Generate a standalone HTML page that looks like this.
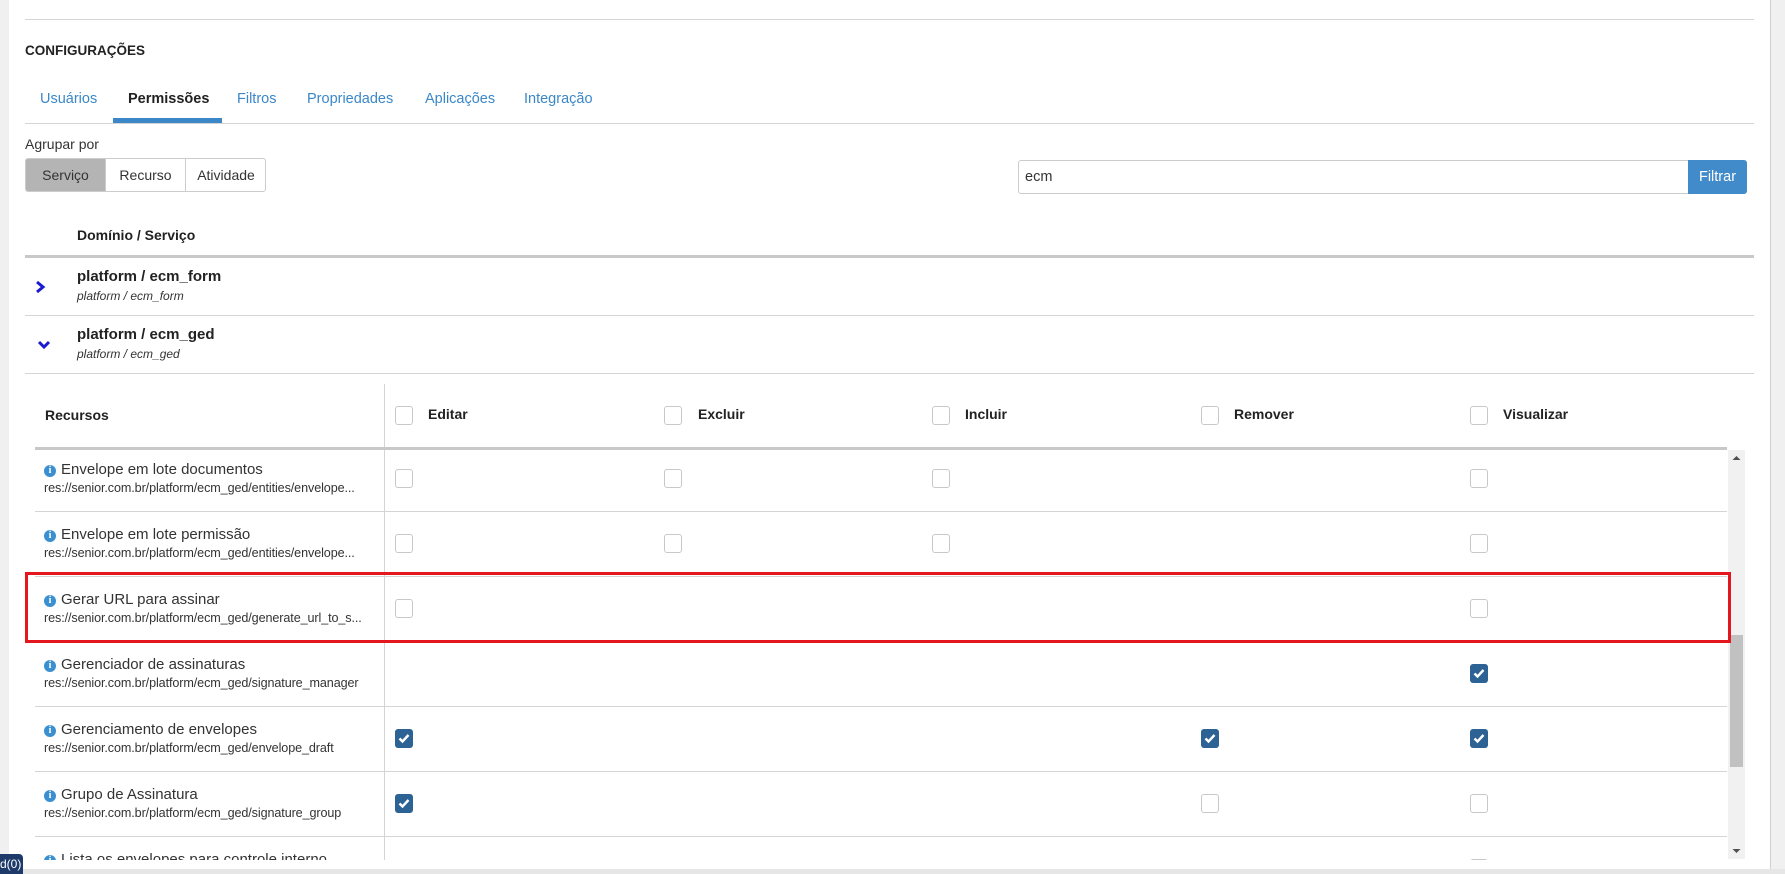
<!DOCTYPE html>
<html><head><meta charset="utf-8"><style>
*{margin:0;padding:0;box-sizing:border-box}
body{width:1785px;height:874px;overflow:hidden;background:#fff;font-family:"Liberation Sans",sans-serif;color:#333;position:relative}
.a{position:absolute;white-space:nowrap}
.cb{position:absolute;width:18px;height:19px;border:1px solid #c8c8c8;border-radius:3px;background:#fff}
.ck{position:absolute;width:18px;height:19px;border-radius:3px;background:#2d6394}
.ck svg{position:absolute;left:3px;top:4px}
.hl{position:absolute;left:25px;width:1729px;height:1px;background:#d4d4d4}
.rl{position:absolute;left:35px;width:1692px;height:1px;background:#d4d4d4}
.t{font-size:15px;color:#333}
.u{font-size:12.6px;color:#333;letter-spacing:-0.1px}
.i{display:inline-block;width:12px;height:12px;border-radius:50%;background:#3a8fd0;color:#fff;font-size:10px;font-weight:bold;text-align:center;line-height:12px;font-family:"Liberation Serif",serif;margin-right:5px;vertical-align:1px}
</style></head><body>
<div class="a" style="left:0;top:0;width:9px;height:874px;background:#f0f0f0"></div>
<div class="a" style="left:1770px;top:0;width:1px;height:869px;background:#d0d0d0"></div>
<div class="a" style="left:1771px;top:0;width:14px;height:874px;background:#f0f0f0"></div>
<div class="hl" style="top:19px"></div>
<div class="a" style="left:25px;top:43px;font-size:13.5px;font-weight:bold;color:#222">CONFIGURAÇÕES</div>
<div class="a" style="left:40px;top:91px;font-size:14.5px;color:#3b87c8">Usuários</div>
<div class="a" style="left:128px;top:91px;font-size:14.5px;font-weight:bold;color:#222">Permissões</div>
<div class="a" style="left:237px;top:91px;font-size:14.5px;color:#3b87c8">Filtros</div>
<div class="a" style="left:307px;top:91px;font-size:14.5px;color:#3b87c8">Propriedades</div>
<div class="a" style="left:425px;top:91px;font-size:14.5px;color:#3b87c8">Aplicações</div>
<div class="a" style="left:524px;top:91px;font-size:14.5px;color:#3b87c8">Integração</div>
<div class="a" style="left:113px;top:118px;width:109px;height:5px;background:#3b87c8"></div>
<div class="hl" style="top:123px"></div>
<div class="a" style="left:25px;top:136px;font-size:14px">Agrupar por</div>
<div class="a" style="left:25px;top:158px;width:241px;height:34px;border:1px solid #ccc;border-radius:3px;overflow:hidden;font-size:14px">
<div class="a" style="left:0;top:0;width:79px;height:32px;background:#b4b4b4;line-height:32px;text-align:center">Serviço</div>
<div class="a" style="left:79px;top:0;width:80px;height:32px;border-left:1px solid #ccc;line-height:32px;text-align:center">Recurso</div>
<div class="a" style="left:159px;top:0;width:81px;height:32px;border-left:1px solid #ccc;line-height:32px;text-align:center">Atividade</div>
</div>
<div class="a" style="left:1018px;top:160px;width:671px;height:34px;border:1px solid #ccc;border-radius:3px 0 0 3px;font-size:14.5px;line-height:32px;padding-left:6px">ecm</div>
<div class="a" style="left:1688px;top:160px;width:59px;height:34px;background:#428bca;border-radius:0 3px 3px 0;color:#fff;font-size:14.5px;line-height:34px;text-align:center">Filtrar</div>
<div class="a" style="left:77px;top:227px;font-size:14px;font-weight:bold;color:#222">Domínio / Serviço</div>
<div class="a" style="left:25px;top:255px;width:1729px;height:3px;background:#c8c8c8"></div>
<svg class="a" style="left:34px;top:280px" width="12" height="14"><path d="M3 2 L9 7 L3 12" stroke="#1a1ad0" stroke-width="3" fill="none"/></svg>
<div class="a" style="left:77px;top:268px;font-size:15px;font-weight:bold;color:#222">platform / ecm_form</div>
<div class="a" style="left:77px;top:289px;font-size:12px;font-style:italic">platform / ecm_form</div>
<div class="hl" style="top:315px"></div>
<svg class="a" style="left:37px;top:340px" width="14" height="10"><path d="M2 2 L7 7 L12 2" stroke="#1a1ad0" stroke-width="3" fill="none"/></svg>
<div class="a" style="left:77px;top:326px;font-size:15px;font-weight:bold;color:#222">platform / ecm_ged</div>
<div class="a" style="left:77px;top:347px;font-size:12px;font-style:italic">platform / ecm_ged</div>
<div class="hl" style="top:373px"></div>
<div class="a" style="left:384px;top:384px;width:1px;height:476px;background:#d4d4d4"></div>
<div class="a" style="left:45px;top:407px;font-size:14px;font-weight:bold;color:#222">Recursos</div>
<div class="cb" style="left:395px;top:406px"></div><div class="a" style="left:428px;top:406px;font-size:14px;font-weight:bold;color:#222">Editar</div>
<div class="cb" style="left:664px;top:406px"></div><div class="a" style="left:698px;top:406px;font-size:14px;font-weight:bold;color:#222">Excluir</div>
<div class="cb" style="left:932px;top:406px"></div><div class="a" style="left:965px;top:406px;font-size:14px;font-weight:bold;color:#222">Incluir</div>
<div class="cb" style="left:1201px;top:406px"></div><div class="a" style="left:1234px;top:406px;font-size:14px;font-weight:bold;color:#222">Remover</div>
<div class="cb" style="left:1470px;top:406px"></div><div class="a" style="left:1503px;top:406px;font-size:14px;font-weight:bold;color:#222">Visualizar</div>
<div class="a" style="left:35px;top:447px;width:1692px;height:3px;background:#c8c8c8"></div>
<div class="a" style="left:35px;top:450px;width:1692px;height:410px;overflow:hidden">
<div style="position:absolute;left:0;top:-450px;width:1692px;height:900px">
<div class="a t" style="left:9px;top:461px"><span class="i">i</span>Envelope em lote documentos</div>
<div class="a u" style="left:9px;top:481px">res://senior.com.br/platform/ecm_ged/entities/envelope...</div>
<div class="cb" style="left:360px;top:469px"></div><div class="cb" style="left:629px;top:469px"></div><div class="cb" style="left:897px;top:469px"></div><div class="cb" style="left:1435px;top:469px"></div>
<div class="rl" style="left:0;top:511px"></div>
<div class="a t" style="left:9px;top:526px"><span class="i">i</span>Envelope em lote permissão</div>
<div class="a u" style="left:9px;top:546px">res://senior.com.br/platform/ecm_ged/entities/envelope...</div>
<div class="cb" style="left:360px;top:534px"></div><div class="cb" style="left:629px;top:534px"></div><div class="cb" style="left:897px;top:534px"></div><div class="cb" style="left:1435px;top:534px"></div>
<div class="rl" style="left:0;top:576px"></div>
<div class="a t" style="left:9px;top:591px"><span class="i">i</span>Gerar URL para assinar</div>
<div class="a u" style="left:9px;top:611px">res://senior.com.br/platform/ecm_ged/generate_url_to_s...</div>
<div class="cb" style="left:360px;top:599px"></div><div class="cb" style="left:1435px;top:599px"></div>
<div class="rl" style="left:0;top:641px"></div>
<div class="a t" style="left:9px;top:656px"><span class="i">i</span>Gerenciador de assinaturas</div>
<div class="a u" style="left:9px;top:676px">res://senior.com.br/platform/ecm_ged/signature_manager</div>
<div class="ck" style="left:1435px;top:664px"><svg width="12" height="11"><path d="M1.5 5.5 L4.5 8.5 L10.5 2" stroke="#fff" stroke-width="2.4" fill="none"/></svg></div>
<div class="rl" style="left:0;top:706px"></div>
<div class="a t" style="left:9px;top:721px"><span class="i">i</span>Gerenciamento de envelopes</div>
<div class="a u" style="left:9px;top:741px">res://senior.com.br/platform/ecm_ged/envelope_draft</div>
<div class="ck" style="left:360px;top:729px"><svg width="12" height="11"><path d="M1.5 5.5 L4.5 8.5 L10.5 2" stroke="#fff" stroke-width="2.4" fill="none"/></svg></div>
<div class="ck" style="left:1166px;top:729px"><svg width="12" height="11"><path d="M1.5 5.5 L4.5 8.5 L10.5 2" stroke="#fff" stroke-width="2.4" fill="none"/></svg></div>
<div class="ck" style="left:1435px;top:729px"><svg width="12" height="11"><path d="M1.5 5.5 L4.5 8.5 L10.5 2" stroke="#fff" stroke-width="2.4" fill="none"/></svg></div>
<div class="rl" style="left:0;top:771px"></div>
<div class="a t" style="left:9px;top:786px"><span class="i">i</span>Grupo de Assinatura</div>
<div class="a u" style="left:9px;top:806px">res://senior.com.br/platform/ecm_ged/signature_group</div>
<div class="ck" style="left:360px;top:794px"><svg width="12" height="11"><path d="M1.5 5.5 L4.5 8.5 L10.5 2" stroke="#fff" stroke-width="2.4" fill="none"/></svg></div>
<div class="cb" style="left:1166px;top:794px"></div><div class="cb" style="left:1435px;top:794px"></div>
<div class="rl" style="left:0;top:836px"></div>
<div class="a t" style="left:9px;top:851px"><span class="i">i</span>Lista os envelopes para controle interno</div>
<div class="cb" style="left:1435px;top:859px"></div>
</div></div>
<div class="a" style="left:384px;top:450px;width:1px;height:410px;background:#d4d4d4"></div>
<div class="a" style="left:1728px;top:450px;width:17px;height:409px;background:#f1f1f1"></div>
<div class="a" style="left:1730px;top:635px;width:13px;height:132px;background:#c1c1c1"></div>
<svg class="a" style="left:1732px;top:455px" width="9" height="6"><path d="M0.5 5 L4.5 1 L8.5 5Z" fill="#505050"/></svg>
<svg class="a" style="left:1732px;top:848px" width="9" height="6"><path d="M0.5 1 L4.5 5 L8.5 1Z" fill="#505050"/></svg>
<div class="a" style="left:25px;top:572px;width:1706px;height:71px;border:3px solid #e3171d"></div>
<div class="a" style="left:0;top:869px;width:1785px;height:5px;background:#e6e6e6"></div>
<div class="a" style="left:0;top:854px;width:23px;height:20px;background:#1d3a6b;color:#fff;font-size:12px;line-height:20px;border-radius:0 4px 0 0;overflow:hidden;text-align:right;padding-right:2px">d(0)</div>
</body></html>
